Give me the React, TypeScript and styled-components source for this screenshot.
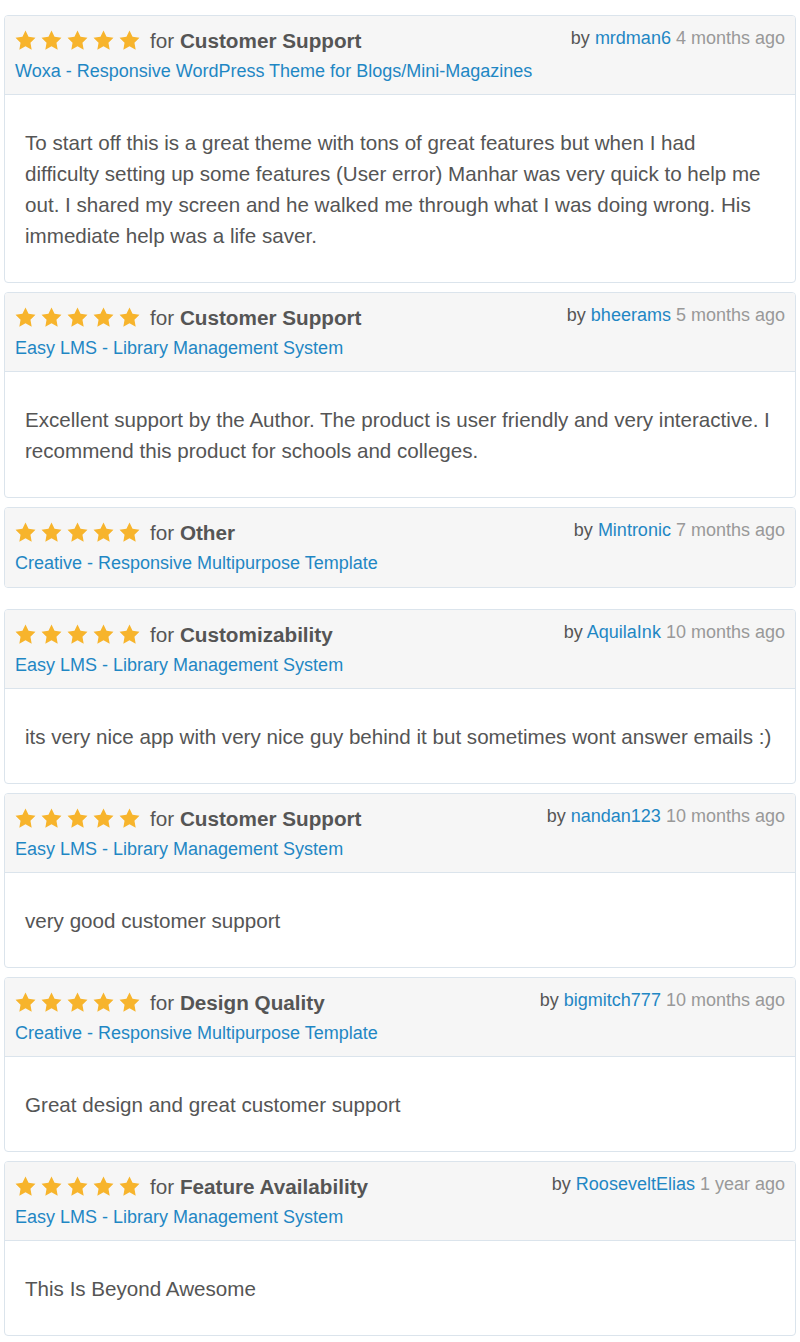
import React from "react";
import styled, { createGlobalStyle } from "styled-components";

type Review = {
  category: string;
  product: string;
  author: string;
  time: string;
  text?: string[];
};

const reviews: Review[] = [
  {
    category: "Customer Support",
    product: "Woxa - Responsive WordPress Theme for Blogs/Mini-Magazines",
    author: "mrdman6",
    time: "4 months ago",
    text: [
      "To start off this is a great theme with tons of great features but when I had",
      "difficulty setting up some features (User error) Manhar was very quick to help me",
      "out. I shared my screen and he walked me through what I was doing wrong. His",
      "immediate help was a life saver.",
    ],
  },
  {
    category: "Customer Support",
    product: "Easy LMS - Library Management System",
    author: "bheerams",
    time: "5 months ago",
    text: [
      "Excellent support by the Author. The product is user friendly and very interactive. I",
      "recommend this product for schools and colleges.",
    ],
  },
  {
    category: "Other",
    product: "Creative - Responsive Multipurpose Template",
    author: "Mintronic",
    time: "7 months ago",
  },
  {
    category: "Customizability",
    product: "Easy LMS - Library Management System",
    author: "AquilaInk",
    time: "10 months ago",
    text: ["its very nice app with very nice guy behind it but sometimes wont answer emails :)"],
  },
  {
    category: "Customer Support",
    product: "Easy LMS - Library Management System",
    author: "nandan123",
    time: "10 months ago",
    text: ["very good customer support"],
  },
  {
    category: "Design Quality",
    product: "Creative - Responsive Multipurpose Template",
    author: "bigmitch777",
    time: "10 months ago",
    text: ["Great design and great customer support"],
  },
  {
    category: "Feature Availability",
    product: "Easy LMS - Library Management System",
    author: "RooseveltElias",
    time: "1 year ago",
    text: ["This Is Beyond Awesome"],
  },
];

const GlobalStyle = createGlobalStyle`
  body {
    margin: 0;
    background: #fff;
    font-family: "Liberation Sans", Arial, sans-serif;
    color: #555;
  }
`;

const Star = () => (
  <svg width="21" height="20" viewBox="0 0 24 23">
    <path
      d="M12 0.6l3.5 7.3 8 1.1-5.8 5.6 1.4 8-7.1-3.8-7.1 3.8 1.4-8L0.5 9l8-1.1z"
      fill="#f7b42c"
    />
  </svg>
);

function App() {
  return (
    <>
      <GlobalStyle />
      <StyledList>
        {reviews.map((r, i) => (
          <StyledCard key={i} $empty={!r.text}>
            <StyledHeader $empty={!r.text}>
              <StyledTopRow>
                <StyledRating>
                  <StyledStars>
                    {Array(5)
                      .fill(0)
                      .map((_, k) => (
                        <Star key={k} />
                      ))}
                  </StyledStars>
                  <span>
                    for <b>{r.category}</b>
                  </span>
                </StyledRating>
                <StyledMeta>
                  by <a href="#">{r.author}</a> <StyledTime>{r.time}</StyledTime>
                </StyledMeta>
              </StyledTopRow>
              <StyledProduct href="#">{r.product}</StyledProduct>
            </StyledHeader>
            {r.text && (
              <StyledBody>
                {r.text.map((line, k) => (
                  <div key={k}>{line}</div>
                ))}
              </StyledBody>
            )}
          </StyledCard>
        ))}
      </StyledList>
    </>
  );
}

export default App;

const StyledList = styled.div`
  display: flex;
  flex-direction: column;
  padding: 15px 4px 0;
`;

const StyledCard = styled.div<{ $empty: boolean }>`
  border: 1px solid #dbe4ec;
  border-radius: 4px;
  background: #fff;
  margin-bottom: ${(p) => (p.$empty ? "21px" : "9px")};
  overflow: hidden;
`;

const StyledHeader = styled.div<{ $empty: boolean }>`
  background: #f6f6f6;
  padding: 9px 10px 10px;
  border-bottom: ${(p) => (p.$empty ? "none" : "1px solid #dbe4ec")};
  height: 79px;
  box-sizing: border-box;
`;

const StyledTopRow = styled.div`
  display: flex;
  justify-content: space-between;
  align-items: flex-start;
  height: 31px;
`;

const StyledRating = styled.div`
  display: flex;
  align-items: center;
  font-size: 20.7px;
  line-height: 31px;
  color: #555;

  b {
    color: #555;
  }
`;

const StyledStars = styled.span`
  display: inline-flex;
  gap: 5px;
  margin-right: 10px;
  position: relative;
  top: -1px;
`;

const StyledMeta = styled.div`
  font-size: 18px;
  line-height: 27px;
  color: #555;

  a {
    color: #1f87c4;
    text-decoration: none;
  }
`;

const StyledTime = styled.span`
  color: #999;
`;

const StyledProduct = styled.a`
  display: block;
  font-size: 18px;
  line-height: 30px;
  color: #1f87c4;
  text-decoration: none;
`;

const StyledBody = styled.div`
  padding: 32px 20px 31px;
  font-size: 20.6px;
  line-height: 31px;
  color: #555;
`;
